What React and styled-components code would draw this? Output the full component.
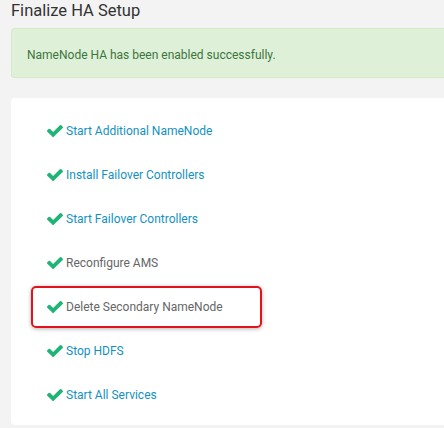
import React from "react";
import styled, { createGlobalStyle } from "styled-components";

const Global = createGlobalStyle`
  html, body { margin: 0; padding: 0; background: #f3f3f3; }
  body { font-family: Roboto, "Liberation Sans", sans-serif; }
`;

const Page = styled.div`
  padding: 0 0 0 11px;
  height: 428px;
  box-sizing: border-box;
  overflow: hidden;
`;

const Title = styled.h2`
  margin: 0;
  font-size: 16.5px;
  font-weight: 400;
  line-height: 22px;
  color: #333;
  height: 28px;
`;

const Alert = styled.div`
  background: #dff0d8;
  border: 1px solid #d6e9c6;
  border-right: none;
  border-radius: 4px 0 0 4px;
  padding: 19px 15px 15px;
  font-size: 12px;
  line-height: 14px;
  color: #3c763d;
`;

const Panel = styled.div`
  margin-top: 20px;
  background: #fff;
  border-radius: 4px 0 0 4px;
  padding: 12px 0 9px 20px;
  display: flex;
  flex-direction: column;
  gap: 2px;
`;

const Item = styled.div`
  width: 231px;
  height: 42px;
  box-sizing: border-box;
  display: flex;
  align-items: center;
  gap: 3px;
  padding-left: 14px;
  border: 2px solid ${(p) => (p.$active ? "#e3131b" : "transparent")};
  border-radius: 5px;
  box-shadow: ${(p) => (p.$active ? "0 1px 4px rgba(0,0,0,0.3)" : "none")};
`;

const Label = styled.span`
  font-size: 12px;
  line-height: 14px;
  color: ${(p) => (p.$muted ? "#666" : "#1491c1")};
`;

const Check = () => (
  <svg width="16" height="12" viewBox="121 334 1550 1188" fill="#1eb475" preserveAspectRatio="none">
    <path d="M1671 566q0 40-28 68l-724 724-136 136q-28 28-68 28t-68-28l-136-136-362-362q-28-28-28-68t28-68l136-136q28-28 68-28t68 28l294 295 656-657q28-28 68-28t68 28l136 136q28 28 28 68z" />
  </svg>
);

const steps = [
  { label: "Start Additional NameNode" },
  { label: "Install Failover Controllers" },
  { label: "Start Failover Controllers" },
  { label: "Reconfigure AMS", muted: true },
  { label: "Delete Secondary NameNode", muted: true, active: true },
  { label: "Stop HDFS" },
  { label: "Start All Services" },
];

export default function App() {
  return (
    <Page>
      <Global />
      <Title>Finalize HA Setup</Title>
      <Alert>NameNode HA has been enabled successfully.</Alert>
      <Panel>
        {steps.map((s) => (
          <Item key={s.label} $active={s.active}>
            <Check />
            <Label $muted={s.muted}>{s.label}</Label>
          </Item>
        ))}
      </Panel>
    </Page>
  );
}
